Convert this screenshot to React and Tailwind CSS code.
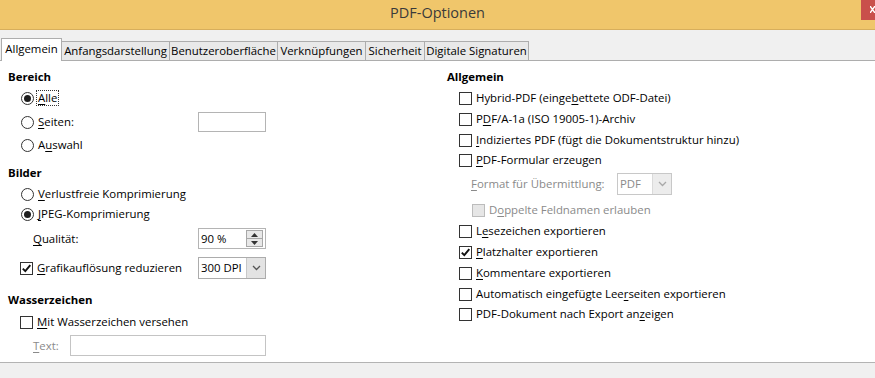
import React from "react";

const U = ({ children }) => (
  <span className="underline decoration-1 underline-offset-[2px]">{children}</span>
);

function Radio({ checked }) {
  return (
    <span className="w-[13px] h-[13px] rounded-full border border-[#333] bg-white flex items-center justify-center shrink-0">
      {checked && <span className="w-[7px] h-[7px] rounded-full bg-[#1e1e1e]" />}
    </span>
  );
}

function Check({ checked, disabled }) {
  return (
    <span
      className={
        "w-[13px] h-[13px] border flex items-center justify-center shrink-0 " +
        (disabled ? "border-[#bcbcbc] bg-[#e6e6e6]" : "border-[#333] bg-white")
      }
    >
      {checked && (
        <svg width="11" height="11" viewBox="0 0 11 11">
          <path d="M1.8 5.6 L4.3 8.2 L9.3 2.2" fill="none" stroke="#111" strokeWidth="1.9" />
        </svg>
      )}
    </span>
  );
}

function Chevron({ color = "#555" }) {
  return (
    <svg width="9" height="6" viewBox="0 0 9 6">
      <path d="M1 1 L4.5 4.5 L8 1" fill="none" stroke={color} strokeWidth="1.3" />
    </svg>
  );
}

const tabs = [
  ["Allgemein", "w-[61px]"],
  ["Anfangsdarstellung", "w-[109px]"],
  ["Benutzeroberfläche", "w-[109px]"],
  ["Verknüpfungen", "w-[89px]"],
  ["Sicherheit", "w-[60px]"],
  ["Digitale Signaturen", "w-[105px]"],
];

export default function App() {
  return (
    <div className="w-[875px] h-[378px] bg-[#f0f0f0] flex flex-col overflow-hidden font-['Open_Sans',sans-serif] text-[11.4px] text-black leading-none">
      {/* title bar */}
      <div className="relative h-[30px] shrink-0 bg-[#f0c66b] border-b border-[#d7ae5c] flex items-center justify-center">
        <span className="text-[14.5px] text-[#3a3a3a] mt-[-2px]">PDF-Optionen</span>
        <div className="absolute right-0 top-0 w-[14px] h-[20px] bg-[#c9504b]">
          <svg className="absolute left-[9px] top-[6px]" width="5" height="7" viewBox="0 0 5 7">
            <path d="M0 0 L5 7 M5 0 L0 7" stroke="white" strokeWidth="1.4" />
          </svg>
        </div>
      </div>

      {/* tabs */}
      <div className="h-[31px] shrink-0 flex items-end pl-[1px] border-b border-[#adadad]">
        {tabs.map(([label, w], i) => (
          <div
            key={label}
            className={
              w +
              " flex items-center justify-center border-t border-l border-r border-[#adadad] whitespace-nowrap " +
              (i === 0
                ? "h-[23px] bg-white mb-[-1px] relative z-10 pb-[2px]"
                : "h-[19px] bg-[#e9e9e9] -ml-px")
            }
          >
            {label}
          </div>
        ))}
      </div>

      {/* content */}
      <div className="h-[302px] shrink-0 bg-white border-b border-[#b3b3b3] flex pl-[8px] gap-[181px]">
        {/* left */}
        <div className="w-[258px] pt-[8px]">
          <div className="h-[16px] flex items-center font-bold">Bereich</div>
          <div className="h-[16px] mt-[5px] flex items-center pl-[13px] gap-[3px]">
            <Radio checked />
            <span className="outline outline-1 outline-dotted outline-[#333] px-[1px] py-[1px]">
              <U>A</U>lle
            </span>
          </div>
          <div className="h-[20px] mt-[6px] flex items-center pl-[13px] gap-[4px]">
            <Radio />
            <span>
              <U>S</U>eiten:
            </span>
            <div className="ml-auto w-[68px] h-[20px] border border-[#b4b4b4] bg-white" />
          </div>
          <div className="h-[16px] mt-[5px] flex items-center pl-[13px] gap-[4px]">
            <Radio />
            <span>
              A<U>u</U>swahl
            </span>
          </div>

          <div className="h-[16px] mt-[12px] flex items-center font-bold">Bilder</div>
          <div className="h-[16px] mt-[5px] flex items-center pl-[13px] gap-[4px]">
            <Radio />
            <span>
              <U>V</U>erlustfreie Komprimierung
            </span>
          </div>
          <div className="h-[16px] mt-[4px] flex items-center pl-[13px] gap-[4px]">
            <Radio checked />
            <span>
              <U>J</U>PEG-Komprimierung
            </span>
          </div>
          <div className="h-[21px] mt-[6px] flex items-center pl-[25px]">
            <span>
              <U>Q</U>ualität:
            </span>
            <div className="ml-auto w-[68px] h-[21px] border border-[#b4b4b4] bg-white flex items-center">
              <span className="pl-[2px]">90 %</span>
              <div className="ml-auto mr-[2px] w-[17px] h-[17px] flex flex-col">
                <div className="flex-1 border border-[#a8a8a8] bg-[#e8e8e8] flex items-center justify-center">
                  <svg width="7" height="4" viewBox="0 0 7 4">
                    <path d="M0 4 L3.5 0 L7 4 Z" fill="#333" />
                  </svg>
                </div>
                <div className="flex-1 border border-t-0 border-[#a8a8a8] bg-[#e8e8e8] flex items-center justify-center">
                  <svg width="7" height="4" viewBox="0 0 7 4">
                    <path d="M0 0 L3.5 4 L7 0 Z" fill="#333" />
                  </svg>
                </div>
              </div>
            </div>
          </div>
          <div className="h-[22px] mt-[8px] flex items-center pl-[12px] gap-[4px]">
            <Check checked />
            <span>
              <U>G</U>rafikauflösung reduzieren
            </span>
            <div className="ml-auto w-[68px] h-[22px] border border-[#acacac] bg-white flex items-stretch">
              <span className="flex-1 flex items-center pl-[2px]">300 DPI</span>
              <div className="w-[19px] bg-[#e3e3e3] border-l border-[#c8c8c8] flex items-center justify-center">
                <Chevron />
              </div>
            </div>
          </div>

          <div className="h-[16px] mt-[13px] flex items-center font-bold">Wasserzeichen</div>
          <div className="h-[16px] mt-[6px] flex items-center pl-[12px] gap-[4px]">
            <Check />
            <span>
              <U>M</U>it Wasserzeichen versehen
            </span>
          </div>
          <div className="h-[21px] mt-[5px] flex items-center pl-[25px] text-[#8a8a8a]">
            <span>
              <U>T</U>ext:
            </span>
            <div className="ml-auto w-[196px] h-[21px] border border-[#c4c4c4] bg-white" />
          </div>
        </div>

        {/* right */}
        <div className="w-[420px] pt-[8px]">
          <div className="h-[16px] flex items-center font-bold">Allgemein</div>
          <Row mt="mt-[5px]">
            Hybrid-PDF (einge<U>b</U>ettete ODF-Datei)
          </Row>
          <Row mt="mt-[5px]">
            P<U>D</U>F/A-1a (ISO 19005-1)-Archiv
          </Row>
          <Row mt="mt-[5px]">
            <U>I</U>ndiziertes PDF (fügt die Dokumentstruktur hinzu)
          </Row>
          <Row mt="mt-[4px]">
            <U>P</U>DF-Formular erzeugen
          </Row>
          <div className="h-[22px] mt-[5px] flex items-center pl-[24px] text-[#8a8a8a]">
            <span className="w-[146px]">
              <U>F</U>ormat für Übermittlung:
            </span>
            <div className="w-[55px] h-[22px] border border-[#c8c8c8] bg-white flex items-stretch">
              <span className="flex-1 flex items-center pl-[2px]">PDF</span>
              <div className="w-[19px] bg-[#ececec] border-l border-[#dadada] flex items-center justify-center">
                <Chevron color="#a8a8a8" />
              </div>
            </div>
          </div>
          <div className="h-[16px] mt-[7px] flex items-center pl-[25px] gap-[4px] text-[#8a8a8a]">
            <Check disabled />
            <span>
              D<U>o</U>ppelte Feldnamen erlauben
            </span>
          </div>
          <Row mt="mt-[5px]">
            L<U>e</U>sezeichen exportieren
          </Row>
          <Row mt="mt-[5px]" checked>
            <U>P</U>latzhalter exportieren
          </Row>
          <Row mt="mt-[5px]">
            <U>K</U>ommentare exportieren
          </Row>
          <Row mt="mt-[5px]">
            Automatisch eingefügte Lee<U>r</U>seiten exportieren
          </Row>
          <Row mt="mt-[4px]">
            PDF-Dokument nach Export an<U>z</U>eigen
          </Row>
        </div>
      </div>

      <div className="flex-1" />
    </div>
  );
}

function Row({ mt, checked, children }) {
  return (
    <div className={"h-[16px] flex items-center pl-[12px] gap-[4px] " + mt}>
      <Check checked={checked} />
      <span>{children}</span>
    </div>
  );
}
